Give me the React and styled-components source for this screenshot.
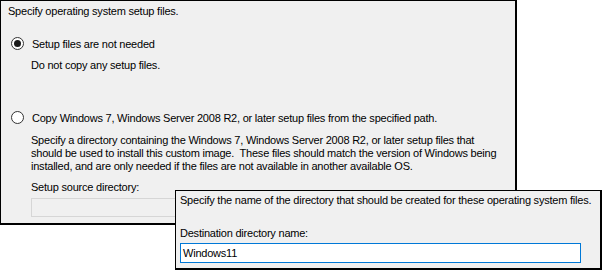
import React from "react";
import styled, { createGlobalStyle } from "styled-components";

const Global = createGlobalStyle`
  html, body { margin: 0; padding: 0; background: #fff; }
  body { font-family: "Liberation Sans", Arial, sans-serif; }
`;

const Canvas = styled.div`
  position: relative;
  width: 602px;
  height: 270px;
  background: #fff;
  overflow: hidden;
`;

const Panel = styled.div`
  box-sizing: border-box;
  background: #f0f0f0;
  border-style: solid;
  border-color: #000;
  border-width: 1px 2px 2px 1px;
  display: flex;
  flex-direction: column;
  font-size: 11px;
  line-height: 13px;
  letter-spacing: -0.22px;
  color: #000;
`;

const MainPanel = styled(Panel)`
  width: 517px;
  height: 225px;
  padding: 4px 0 6px 7px;
`;

const OverlayPanel = styled(Panel)`
  position: absolute;
  left: 175px;
  top: 190px;
  width: 427px;
  height: 80px;
  padding: 3px 0 5px 4px;
`;

const Line = styled.div`
  margin-top: ${(p) => p.$mt || 0}px;
  margin-left: ${(p) => p.$ml || 0}px;
  white-space: nowrap;
`;

const OptionRow = styled.label`
  display: flex;
  align-items: center;
  gap: 8px;
  margin-top: ${(p) => p.$mt || 0}px;
  margin-left: 3px;
  height: 13px;
  white-space: nowrap;
`;

const Radio = styled.span`
  box-sizing: border-box;
  width: 13px;
  height: 13px;
  margin-top: -2px;
  border-radius: 50%;
  border: 1px solid #333;
  background: #fff;
  display: flex;
  align-items: center;
  justify-content: center;
  flex: none;
  &::after {
    content: "";
    display: ${(p) => (p.$checked ? "block" : "none")};
    width: 7px;
    height: 7px;
    border-radius: 50%;
    background: #1a1a1a;
  }
`;

const Paragraph = styled.div`
  margin-top: ${(p) => p.$mt || 0}px;
  margin-left: 23px;
  white-space: nowrap;
`;

const TextBox = styled.div`
  box-sizing: border-box;
  margin-top: ${(p) => p.$mt || 0}px;
  margin-left: ${(p) => p.$ml || 0}px;
  width: ${(p) => p.$w}px;
  height: ${(p) => p.$h}px;
  border: 1px solid ${(p) => (p.$disabled ? "#d6d6d6" : "#0078d7")};
  background: ${(p) => (p.$disabled ? "#f0f0f0" : "#fff")};
  padding: 0 2px;
  display: flex;
  align-items: center;
  font-size: 11px;
  letter-spacing: -0.22px;
  flex: none;
`;

export default function App() {
  return (
    <>
      <Global />
      <Canvas>
        <MainPanel>
          <Line>Specify operating system setup files.</Line>
          <OptionRow $mt={20}>
            <Radio $checked />
            <span>Setup files are not needed</span>
          </OptionRow>
          <Line $mt={8} $ml={23}>Do not copy any setup files.</Line>
          <OptionRow $mt={40}>
            <Radio />
            <span>Copy Windows 7, Windows Server 2008 R2, or later setup files from the specified path.</span>
          </OptionRow>
          <Paragraph $mt={9}>
            Specify a directory containing the Windows 7, Windows Server 2008 R2, or later setup files that
            <br />
            {"should be used to install this custom image.\u00a0 These files should match the version of Windows being"}
            <br />
            installed, and are only needed if the files are not available in another available OS.
          </Paragraph>
          <Line $mt={8} $ml={23}>Setup source directory:</Line>
          <TextBox $mt={4} $ml={23} $w={470} $h={19} $disabled />
        </MainPanel>
        <OverlayPanel>
          <Line>Specify the name of the directory that should be created for these operating system files.</Line>
          <Line $mt={20}>Destination directory name:</Line>
          <TextBox $mt={3} $w={401} $h={20}>Windows11</TextBox>
        </OverlayPanel>
      </Canvas>
    </>
  );
}
